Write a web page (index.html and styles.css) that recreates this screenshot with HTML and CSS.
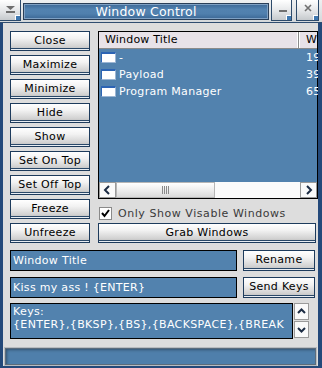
FILE: index.html
```html
<!DOCTYPE html>
<html>
<head>
<meta charset="utf-8">
<link rel="stylesheet" href="styles.css">
</head>
<body>
<div class="titlebar">
  <div class="tbtn first">
    <svg width="21" height="21" viewBox="0 0 21 21"><polygon points="6,6 15,6 10.5,10" fill="#6e6e6e"/><rect x="6" y="11" width="9" height="2" fill="#6e6e6e"/></svg>
    <span class="corner"></span>
  </div>
  <div class="caption">Window Control</div>
  <div class="tbtn min">
    <svg width="21" height="21" viewBox="0 0 21 21"><rect x="7" y="10" width="8" height="2" fill="#707070"/></svg>
    <span class="corner"></span>
  </div>
  <div class="tbtn close">
    <svg width="22" height="21" viewBox="0 0 22 21"><path d="M8 5 L14 11 M14 5 L8 11" stroke="#707070" stroke-width="1.6" fill="none"/></svg>
    <span class="corner"></span>
  </div>
</div>
<div class="client">
  <div class="top">
    <div class="btncol">
      <div class="btn">Close</div>
      <div class="btn">Maximize</div>
      <div class="btn">Minimize</div>
      <div class="btn">Hide</div>
      <div class="btn">Show</div>
      <div class="btn">Set On Top</div>
      <div class="btn">Set Off Top</div>
      <div class="btn">Freeze</div>
      <div class="btn">Unfreeze</div>
    </div>
    <div class="rightcol">
      <div class="list">
        <div class="lhead">
          <div class="hcol1">Window Title</div>
          <div class="hcol2">W</div>
        </div>
        <div class="lbody">
          <div class="row"><div class="c1"><span class="ico"></span><span>-</span></div><div class="c2">19</div></div>
          <div class="row"><div class="c1"><span class="ico"></span><span>Payload</span></div><div class="c2">39</div></div>
          <div class="row"><div class="c1"><span class="ico"></span><span>Program Manager</span></div><div class="c2">65</div></div>
        </div>
        <div class="hscroll">
          <div class="sbtn"><svg width="15" height="14" viewBox="0 0 15 14"><polyline points="9,3 5,7 9,11" stroke="#1c2c44" stroke-width="2" fill="none"/></svg></div>
          <div class="thumb"><svg width="10" height="8" viewBox="0 0 10 8"><path d="M1.5 0V8M3.5 0V8M5.5 0V8M7.5 0V8" stroke="#8a8a8a" stroke-width="1"/></svg></div>
          <div class="track"></div>
          <div class="sbtn"><svg width="15" height="14" viewBox="0 0 15 14"><polyline points="6,3 10,7 6,11" stroke="#1c2c44" stroke-width="2" fill="none"/></svg></div>
        </div>
      </div>
      <div class="check">
        <span class="box"><svg width="11" height="11" viewBox="0 0 11 11"><polyline points="2,5 4.5,8 9,2" stroke="#000" stroke-width="2" fill="none"/></svg></span>
        <span class="clabel">Only Show Visable Windows</span>
      </div>
      <div class="btn wide">Grab Windows</div>
    </div>
  </div>
  <div class="inrow first">
    <div class="field">Window Title</div>
    <div class="btn side">Rename</div>
  </div>
  <div class="inrow">
    <div class="field">Kiss my ass ! {ENTER}</div>
    <div class="btn side">Send Keys</div>
  </div>
  <div class="keysrow">
    <div class="keys">Keys:<br>{ENTER},{BKSP},{BS},{BACKSPACE},{BREAK</div>
    <div class="vscroll">
      <div class="vbtn"><svg width="13" height="15" viewBox="0 0 13 15"><polyline points="3,9 6.5,5.5 10,9" stroke="#1c2c44" stroke-width="2" fill="none"/></svg></div>
      <div class="vbtn"><svg width="13" height="15" viewBox="0 0 13 15"><polyline points="3,6 6.5,9.5 10,6" stroke="#1c2c44" stroke-width="2" fill="none"/></svg></div>
    </div>
  </div>
  <div class="status"></div>
</div>
</body>
</html>
```

FILE: styles.css
```css
* { box-sizing: border-box; margin: 0; padding: 0; }
html, body { width: 322px; height: 368px; overflow: hidden; }
body {
  background: #24497a;
  font-family: "DejaVu Sans", Verdana, sans-serif;
  font-size: 11px;
  color: #000;
}

/* title bar */
.titlebar {
  height: 23px;
  display: flex;
  align-items: flex-start;
  background: linear-gradient(#eef0f1, #d4d8db);
  border-bottom: 1px solid #2f4d70;
}
.tbtn {
  position: relative;
  width: 21px;
  height: 21px;
  background: linear-gradient(#ffffff, #e4e6e8 55%, #c6cacd);
  border-right: 1px solid #2d4a6a;
  border-bottom: 1px solid #2d4a6a;
}
.tbtn svg { display: block; }
.tbtn.first { width: 21px; }
.tbtn.min { margin-left: 2px; width: 21px; border-left: 1px solid #2d4a6a; }
.tbtn.close { margin-left: 4px; width: 23px; border-left: 1px solid #2d4a6a; }
.corner {
  position: absolute;
  right: 0;
  bottom: 0;
  width: 5px;
  height: 5px;
  background: #3f78b0;
  border-top: 1px solid #fff;
  border-left: 1px solid #fff;
}
.caption {
  margin-left: 2px;
  margin-top: 3px;
  width: 246px;
  height: 17px;
  border: 1px solid #2a3f58;
  box-shadow: inset 0 0 0 1px #7fa1c4;
  background: linear-gradient(#3b6795, #5282b0 35%, #5080ae 65%, #3b6795);
  color: #fff;
  font-size: 12.5px;
  line-height: 15px;
  text-align: center;
  letter-spacing: 0.2px;
}

/* client */
.client {
  margin-left: 3px;
  width: 315px;
  height: 343px;
  background: #dddddd;
  overflow: hidden;
  padding: 8px 0 0 7px;
}
.top { display: flex; gap: 8px; }
.btncol {
  width: 80px;
  display: flex;
  flex-direction: column;
  gap: 4px;
}
.btn {
  height: 20px;
  border: 1px solid #1d3b5c;
  background: linear-gradient(#ffffff, #f2f2f2 35%, #d2d2d2 80%, #bcbcbc);
  box-shadow: inset 0 -1px 0 #e9eef3, inset 0 -2px 0 #2a4868;
  text-align: center;
  line-height: 17px;
  letter-spacing: 0.3px;
  white-space: nowrap;
}

.rightcol {
  width: 220px;
  display: flex;
  flex-direction: column;
}
.list {
  height: 168px;
  border: 1px solid #000;
  background: #5282ae;
  display: flex;
  flex-direction: column;
}
.lhead {
  height: 17px;
  display: flex;
  background: #e8e2e8;
  border-bottom: 1px solid #8a8a8a;
}
.hcol1 {
  width: 200px;
  padding-left: 6px;
  line-height: 16px;
  border-right: 1px solid #8a8a8a;
  box-shadow: inset -1px 0 0 #fff;
  letter-spacing: 0.2px;
}
.hcol2 { padding-left: 6px; line-height: 16px; border-left: 1px solid #fff; }
.lbody { flex: 1; color: #fff; }
.row {
  height: 17px;
  display: grid;
  grid-template-columns: 200px auto;
  align-items: center;
  letter-spacing: 0.3px;
}
.c1 { display: flex; align-items: center; }
.c2 { padding-left: 7px; }
.ico {
  width: 15px;
  height: 11px;
  margin-left: 2px;
  margin-right: 3px;
  background: #fff;
  border-top: 2px solid #2c64b4;
  border-left: 1px solid #2c64b4;
  border-right: 1px solid #9cb6d4;
  border-bottom: 1px solid #9cb6d4;
}
.hscroll {
  height: 16px;
  display: flex;
  background: #f2f2f2;
}
.sbtn {
  width: 17px;
  height: 16px;
  background: #fafafa;
  border: 1px solid #9a9a9a;
  display: flex;
  align-items: center;
  justify-content: center;
}
.thumb {
  width: 99px;
  height: 16px;
  background: linear-gradient(#ffffff, #eeeeee 50%, #dadada);
  border: 1px solid #b6b6b6;
  display: flex;
  align-items: center;
  justify-content: center;
}
.track { flex: 1; background: #fbfbfb; }

.check {
  margin-top: 8px;
  height: 13px;
  display: flex;
  align-items: center;
}
.box {
  margin-left: 1px;
  width: 13px;
  height: 13px;
  background: #fff;
  border: 1px solid #8a8a8a;
  display: flex;
  align-items: center;
  justify-content: center;
}
.clabel {
  margin-left: 6px;
  color: #3a3a3a;
  letter-spacing: 0.55px;
}
.btn.wide { margin-top: 3px; width: 218px; }

/* lower rows */
.inrow { display: flex; gap: 6px; margin-top: 6px; }
.inrow.first { margin-top: 7px; }
.field {
  width: 227px;
  height: 21px;
  border: 1px solid #000;
  background: #5282ae;
  color: #fff;
  padding-left: 2px;
  line-height: 19px;
  letter-spacing: 0.3px;
}
.btn.side { width: 72px; height: 21px; line-height: 18px; }

.keysrow { display: flex; margin-top: 5px; }
.keys {
  width: 283px;
  height: 36px;
  border: 1px solid #000;
  background: #5282ae;
  color: #fff;
  padding: 2px 0 0 2px;
  line-height: 12.5px;
  letter-spacing: 0.35px;
  white-space: nowrap;
  overflow: hidden;
}
.vscroll {
  margin-left: 1px;
  display: flex;
  flex-direction: column;
  gap: 1px;
}
.vbtn {
  width: 15px;
  height: 17px;
  background: #fafafa;
  border: 1px solid #9a9a9a;
  display: flex;
  align-items: center;
  justify-content: center;
}

.status {
  margin-top: 8px;
  margin-left: -6px;
  width: 313px;
  height: 19px;
  border: 1px solid #b8bcc0;
  background: #4f7fab;
  box-shadow: inset 0 0 0 1px #5c6c7c, inset 2px 2px 3px rgba(0,0,0,0.35);
}
```
